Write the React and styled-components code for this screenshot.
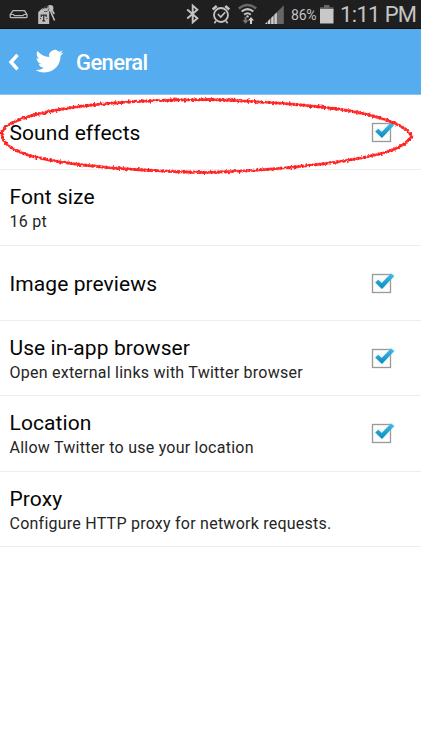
import React from 'react';
import styled, { createGlobalStyle } from 'styled-components';

const GlobalStyle = createGlobalStyle`
  * { box-sizing: border-box; }
  html, body { margin: 0; background: #fff; }
  body { font-family: Roboto, "Liberation Sans", sans-serif; overflow: hidden; }
  svg { display: block; flex: none; }
`;

const Screen = styled.div`
  width: 421px;
  height: 748px;
  background: #fff;
`;

const StatusBar = styled.div`
  height: 29px;
  background: #1f1f1f;
  border-bottom: 1px solid #131010;
  display: flex;
  justify-content: space-between;
  color: #c4c4c4;
`;

const StatusGroup = styled.div`
  display: flex;
  height: 28px;
`;

const Battery = styled.span`
  width: 28px;
  font-size: 14px;
  line-height: 30px;
  letter-spacing: -0.2px;
  white-space: nowrap;
`;

const Clock = styled.span`
  width: 85px;
  padding-left: 4px;
  font-size: 22px;
  line-height: 29px;
  letter-spacing: -0.65px;
  white-space: nowrap;
`;

const Header = styled.header`
  height: 66px;
  background: #55acee;
  border-bottom: 1px solid #8bc5f2;
  display: flex;
  align-items: center;
`;

const HeaderTitle = styled.h1`
  margin: 0;
  padding: 2px 0 0 12px;
  color: #fff;
  font-size: 22px;
  line-height: 26px;
  font-weight: 500;
  letter-spacing: -0.6px;
  white-space: nowrap;
`;

const List = styled.main`
  position: relative;
`;

const Row = styled.div`
  height: ${(p) => p.$height}px;
  padding: 0 25px 0 9.5px;
  border-bottom: 1px solid #ededed;
  display: flex;
  align-items: center;
  justify-content: space-between;
`;

const Labels = styled.div`
  display: flex;
  flex-direction: column;
  padding-top: 2px;
`;

const Title = styled.div`
  font-size: 21px;
  line-height: 26px;
  color: #050505;
  letter-spacing: 0.08px;
  white-space: nowrap;
`;

const Detail = styled.div`
  font-size: 16px;
  line-height: 22px;
  margin-top: 1px;
  color: #252525;
  letter-spacing: 0.24px;
  white-space: nowrap;
`;

const Marker = styled.svg`
  position: absolute;
  left: 0;
  top: 0;
  pointer-events: none;
`;

const LeftIcons = () => (
  <svg width="70" height="28" viewBox="0 0 70 28">
    <path d="M13 10.7h11.5l2.5 4v2q0 1-1 1H11.2q-1 0-1-1v-2z" fill="none" stroke="#b8b8b8" strokeWidth="1.3" strokeLinejoin="round" />
    <path d="M10.5 14.5h3l1 1.2h8.5l1-1.2h3" fill="none" stroke="#b8b8b8" strokeWidth="1.2" />
    <path d="M38.2 12.2l4-4h5l2 3.5V24h-11z" fill="#bebebe" />
    <path d="M50 10l4.6 10.5M51.5 9l2.7 5" fill="none" stroke="#bebebe" strokeWidth="1.6" />
    <circle cx="50.3" cy="8.2" r="3.1" fill="#bebebe" />
    <path d="M42 9.5q3-4 7-2.5M44 11.5q4 1 5-3" fill="none" stroke="#555" strokeWidth="1" />
    <path d="M41.2 17v-1.8h5V17M43.7 15v5.6M42.2 20.8h3" fill="none" stroke="#2d2d2d" strokeWidth="1.2" />
    <path d="M40 18.5h1M46.5 18.5h1" stroke="#2d2d2d" />
  </svg>
);

const RightIcons = () => (
  <svg width="108" height="28" viewBox="183 0 108 28">
    <g fill="none" stroke="#c4c4c4">
      <path d="M187.2 9.5l10.2 8.8-4.7 4.2V5.5l4.7 4.2-10.2 8.8" strokeWidth="1.9" />
      <circle cx="221" cy="15" r="7" strokeWidth="1.8" />
      <path d="M217.8 14l3 3 4.3-4.7" strokeWidth="1.6" />
      <path d="M212.7 9.5l4-3.4M229.3 9.5l-4-3.4" strokeWidth="2.6" />
      <path d="M216 21l-1.6 2.3M226 21l1.6 2.3" strokeWidth="1.6" />
      <path d="M238.8 8.5Q247.5 1.5 256.2 8.5" stroke="#696969" strokeWidth="2.4" />
      <path d="M241.6 11.5Q247.5 6.7 253.4 11.5M244.2 14.6Q247.5 12 250.8 14.6" strokeWidth="2" />
    </g>
    <circle cx="247.5" cy="16.4" r="1.2" fill="#c4c4c4" />
    <path d="M244.5 17h2v3.3h2l-3 3.4-3-3.4h2z" fill="#777" />
    <path d="M251 17l3 3.4h-2V24h-2v-3.6h-2z" fill="#d0d0d0" />
    <path d="M283.8 5.3V24h-18.7z" fill="#666" />
    <path d="M265 24h2v-2zM268 24h2v-5l-2 2zM271.2 24h2.3v-8.4l-2.3 2.3zM274.5 24h2.3V12.4l-2.3 2.2z" fill="#d0d0d0" />
  </svg>
);

const BatteryIcon = () => (
  <svg width="17" height="28" viewBox="319 0 17 28">
    <path d="M324 5h5.5v2.2h4V11H320V7.2h4z" fill="#666" />
    <path d="M320 9h13.5v14.5H320z" fill="#c8c8c8" />
  </svg>
);

const BackIcon = () => (
  <svg width="35" height="65" viewBox="0 29 35 65">
    <path d="M17.5 54.8L11 62l6.5 7.3" fill="none" stroke="#fff" strokeWidth="3.5" />
  </svg>
);

const Bird = () => (
  <svg width="29" height="29" viewBox="-0.5 -0.3 25 25">
    <path fill="#fff" d="M23.953 4.57a10 10 0 01-2.825.775 4.958 4.958 0 002.163-2.723 9.99 9.99 0 01-3.127 1.184 4.92 4.92 0 00-8.384 4.482C7.69 8.095 4.067 6.13 1.64 3.162a4.822 4.822 0 00-.666 2.475c0 1.71.87 3.213 2.188 4.096a4.904 4.904 0 01-2.228-.616v.06a4.923 4.923 0 003.946 4.827 4.996 4.996 0 01-2.212.085 4.936 4.936 0 004.604 3.417 9.867 9.867 0 01-6.102 2.105c-.39 0-.779-.023-1.17-.067a13.995 13.995 0 007.557 2.209c9.053 0 13.998-7.496 13.998-13.985 0-.21 0-.42-.015-.63a9.935 9.935 0 002.46-2.548z" />
  </svg>
);

const Check = () => (
  <svg width="28" height="31" viewBox="0 0 28 31">
    <defs>
      <filter id="glow" x="-50%" y="-50%" width="200%" height="200%"><feGaussianBlur stdDeviation="1.6" /></filter>
      <linearGradient id="tick" x1="0" y1="0" x2="0" y2="1">
        <stop offset="0" stopColor="#49b9df" />
        <stop offset="1" stopColor="#078bc0" />
      </linearGradient>
    </defs>
    <rect x="4.5" y="6.5" width="18" height="18" fill="#fdfdfd" stroke="#999" strokeWidth="1.3" />
    <path d="M7.5 14.3l3-2.2 3.5 3.3 9.5-10.1 3 2.2L14 20z" fill="#9eddf5" opacity=".75" filter="url(#glow)" />
    <path d="M7.2 14.6l3.1-2.9 3.4 3.4 9.2-9.5 3.3 2.4L14 20.9z" fill="url(#tick)" />
  </svg>
);

const settings = [
  { title: 'Sound effects', checked: true, height: 75 },
  { title: 'Font size', detail: '16 pt', height: 76 },
  { title: 'Image previews', checked: true, height: 75 },
  { title: 'Use in-app browser', detail: 'Open external links with Twitter browser', checked: true, height: 75 },
  { title: 'Location', detail: 'Allow Twitter to use your location', checked: true, height: 76 },
  { title: 'Proxy', detail: 'Configure HTTP proxy for network requests.', height: 75 },
];

const loop = 'M2 133C4 126 14 121 27 117C72 104 134 100 210 99.5C262 101 323 106 356 112C389 119 405 126 412 136C404 149 384 154 350 160C306 167 259 171 205 172.5C142 171 70 166 31 156C12 150 1 143 2 133Z';

const Crayon = () => (
  <Marker width="421" height="90" viewBox="0 95 421 90">
    <defs>
      <filter id="rough" filterUnits="userSpaceOnUse" x="0" y="95" width="421" height="90">
        <feTurbulence type="fractalNoise" baseFrequency="0.32" numOctaves="2" seed="8" result="noise" />
        <feDisplacementMap in="SourceGraphic" in2="noise" scale="3.2" xChannelSelector="R" yChannelSelector="G" />
      </filter>
    </defs>
    <g filter="url(#rough)" fill="none" stroke="#ff1c1c">
      <path d={loop} strokeWidth="2.4" opacity=".9" />
      <path d={loop} strokeWidth="3.2" strokeDasharray="2 2.3 1 1.7" />
    </g>
  </Marker>
);

export default function App() {
  return (
    <Screen>
      <GlobalStyle />
      <StatusBar>
        <LeftIcons />
        <StatusGroup>
          <RightIcons />
          <Battery>86%</Battery>
          <BatteryIcon />
          <Clock>1:11 PM</Clock>
        </StatusGroup>
      </StatusBar>
      <Header>
        <BackIcon />
        <Bird />
        <HeaderTitle>General</HeaderTitle>
      </Header>
      <List>
        {settings.map((s) => (
          <Row key={s.title} $height={s.height}>
            <Labels>
              <Title>{s.title}</Title>
              {s.detail && <Detail>{s.detail}</Detail>}
            </Labels>
            {s.checked && <Check />}
          </Row>
        ))}
        <Crayon />
      </List>
    </Screen>
  );
}
